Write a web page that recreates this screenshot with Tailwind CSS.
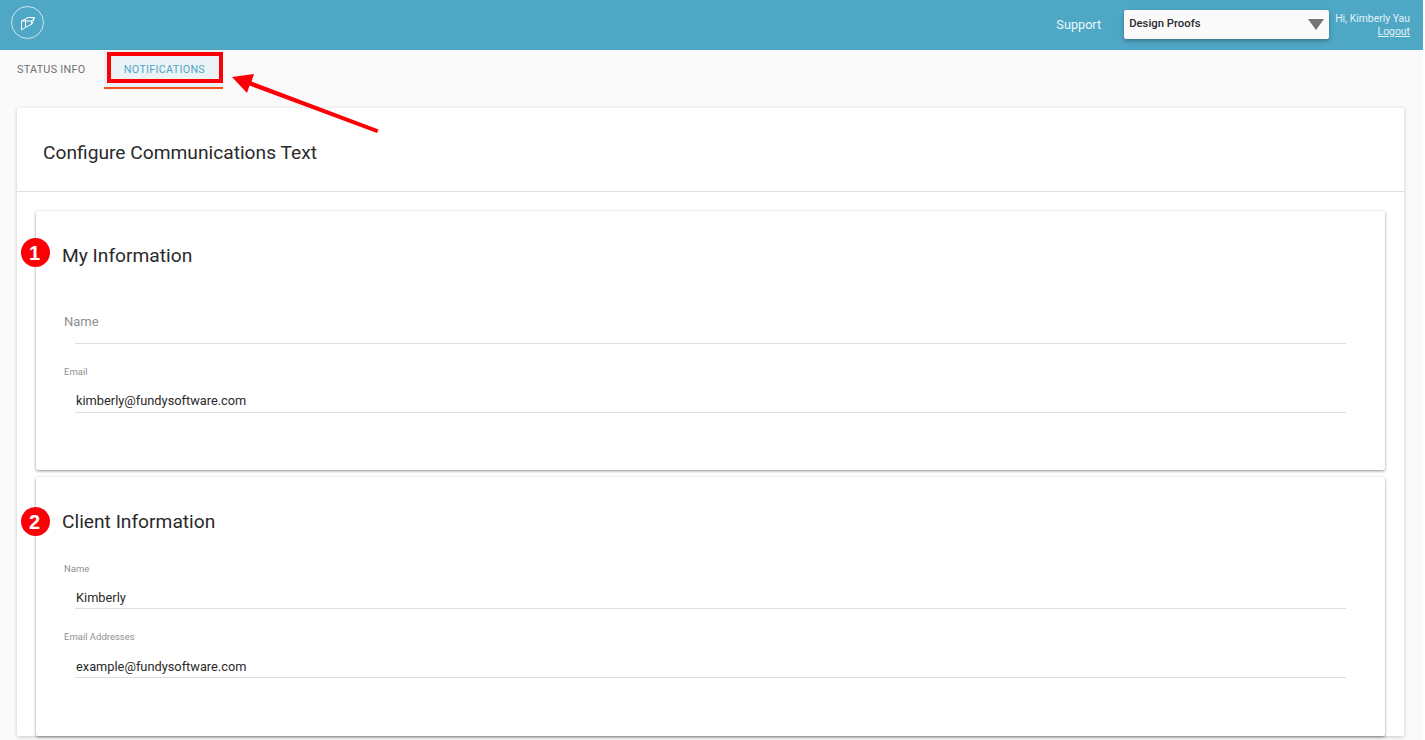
<!DOCTYPE html>
<html lang="en">
<head>
    <meta charset="UTF-8">
    <title>Configure Communications Text</title>
    <script src="https://cdn.jsdelivr.net/npm/@tailwindcss/browser@4"></script>
</head>
<body class="bg-white font-['Roboto',sans-serif] overflow-hidden antialiased">
<div class="w-[1423px] h-[740px] bg-[#fafafa] overflow-hidden relative">
    <!-- top bar -->
    <header class="h-[50px] bg-[#4fa7c6] flex items-center text-white">
        <div class="ml-[11px] w-[33px] h-[33px] mb-[5px] rounded-full border border-white/70 flex items-center justify-center">
            <svg width="16" height="16" viewBox="0 0 16 16" fill="none" stroke="white" stroke-width="1"><path d="M1.500 15V6L8 2.500H14.500L12 9 6 12 1.500 15zM1.500 6H11.500V9.500M5.500 4.500V11.500M11.500 6L14.500 2.500"/></svg>
        </div>
        <a class="ml-auto text-[12.700px] text-white/90">Support</a>
        <div class="ml-[23px] w-[205px] h-[29px] mb-[1px] bg-[#fafafa] rounded-[2px] shadow-[0_2px_4px_rgba(0,0,0,0.3)] flex items-center justify-between pl-[5px] pr-[5px] text-[#2a2a2a]">
            <span class="text-[11.300px] font-medium">Design Proofs</span>
            <span class="w-0 h-0 border-x-[8px] border-x-transparent border-t-[11px] border-t-[#757575]"></span>
        </div>
        <div class="ml-[6px] mr-[13px] text-[10.400px] leading-[13px] text-right text-white/85 mb-[1px]">
            <div>Hi, Kimberly Yau</div>
            <a class="underline">Logout</a>
        </div>
    </header>

    <!-- tabs -->
    <nav class="h-[58px] flex items-start text-[10.800px] font-normal tracking-[0.28px]">
        <a class="ml-[17px] mt-[12px] text-[#6f6f6f]">STATUS INFO</a>
        <a class="ml-[19px] w-[119px] h-[39px] border-b-2 border-[#f4511e] flex justify-center">
            <span class="w-full h-[37px] pt-[4px] pl-[1px] bg-[#ecf3f7] text-[#4fa7c6] flex items-center justify-center">NOTIFICATIONS</span>
        </a>
    </nav>

    <!-- outer card -->
    <main class="mx-[17px] w-[1387px] bg-white rounded-[2px] shadow-[0_1px_4px_rgba(0,0,0,0.2)]">
        <h1 class="h-[84px] border-b border-[#e0e0e0] pl-[26px] pt-[33px] text-[19.200px] leading-[24px] text-[#2a2a2a]">Configure Communications Text</h1>
        <div class="pt-[19px] px-[19px] flex flex-col gap-[7px]">
            <section class="relative h-[259px] bg-white rounded-[2px] shadow-[0_1px_3px_rgba(0,0,0,0.45)]">
                <span class="absolute left-[-15px] top-[27px] w-[29px] h-[29px] rounded-full bg-[#fb0007] text-white font-['Liberation_Sans',sans-serif] font-bold text-[20px] flex items-center justify-center pr-[2px]">1</span>
                <h2 class="absolute left-[26px] top-[33px] text-[19.200px] leading-[24px] text-[#2a2a2a]">My Information</h2>
                <div class="pt-[101px] pl-[28px] text-[13px] text-[#8f8f8f] leading-[20px]">Name</div>
                <div class="ml-[39px] mr-[39px] mt-[11px] border-b border-[#dedede]"></div>
                <div class="pt-[22px] pl-[28px] text-[9.500px] leading-[12px] text-[#909090]">Email</div>
                <div class="ml-[39px] mr-[39px] mt-[9px] h-[26px] pt-[4px] pl-[1px] border-b border-[#dedede] text-[12.800px] leading-[20px] text-[#2a2a2a]">kimberly@fundysoftware.com</div>
            </section>
            <section class="relative h-[259px] bg-white rounded-[2px] shadow-[0_1px_3px_rgba(0,0,0,0.45)]">
                <span class="absolute left-[-15px] top-[30px] w-[29px] h-[29px] rounded-full bg-[#fb0007] text-white font-['Liberation_Sans',sans-serif] font-bold text-[20px] flex items-center justify-center pr-[2px]">2</span>
                <h2 class="absolute left-[26px] top-[33px] text-[19.200px] leading-[24px] text-[#2a2a2a]">Client Information</h2>
                <div class="pt-[86px] pl-[28px] text-[9.500px] leading-[12px] text-[#909090]">Name</div>
                <div class="ml-[39px] mr-[39px] mt-[8px] h-[26px] pt-[5px] pl-[1px] border-b border-[#dedede] text-[12.800px] leading-[20px] text-[#2a2a2a]">Kimberly</div>
                <div class="pt-[22px] pl-[28px] text-[9.500px] leading-[12px] text-[#909090]">Email Addresses</div>
                <div class="ml-[39px] mr-[39px] mt-[9px] h-[26px] pt-[5px] pl-[1px] border-b border-[#dedede] text-[12.800px] leading-[20px] text-[#2a2a2a]">example@fundysoftware.com</div>
            </section>
        </div>
    </main>

    <!-- annotation: red box and arrow over the tab -->
    <div class="absolute left-[107px] top-[52px] w-[116px] h-[31px] border-[4px] border-[#fb0007]"></div>
    <svg class="absolute left-[225px] top-[70px]" width="160" height="70" viewBox="0 0 160 70" fill="#fb0007" stroke="none"><path d="M7 7L29 4L26.500 11.500L153.500 59.500L152 63L24.500 15.500L22 23z"/></svg>
</div>
</body>
</html>
